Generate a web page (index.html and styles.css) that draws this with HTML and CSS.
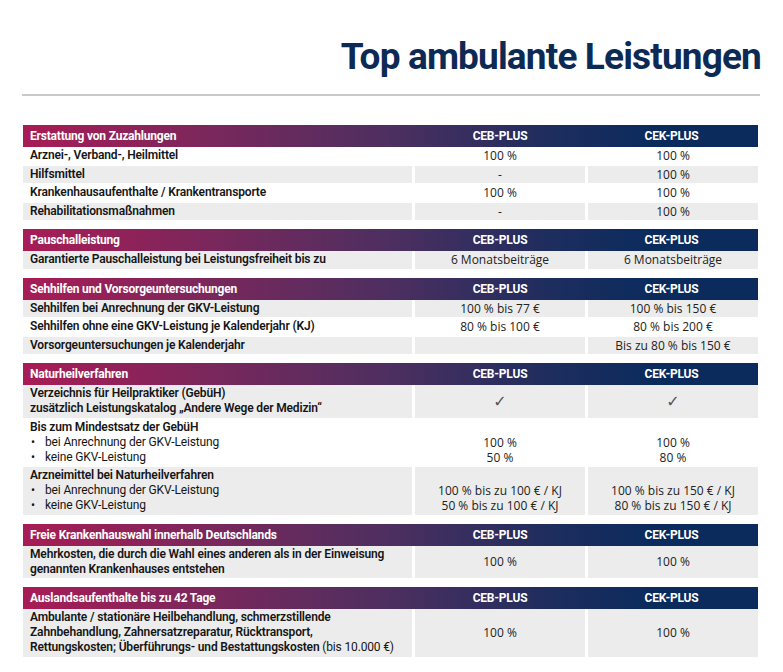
FILE: index.html
```html
<!DOCTYPE html>
<html lang="de">
<head>
    <meta charset="UTF-8">
    <title>Top ambulante Leistungen</title>
    <link rel="stylesheet" href="styles.css">
</head>
<body>
    <div class="page">
        <h1 class="title">Top ambulante Leistungen</h1>
        <hr class="rule">

        <!-- Erstattung von Zuzahlungen -->
        <section class="block">
            <div class="head">
                <span class="head-label">Erstattung von Zuzahlungen</span>
                <span class="head-col">CEB-PLUS</span>
                <span class="head-col">CEK-PLUS</span>
            </div>
            <div class="rows">
                <div class="label">Arznei-, Verband-, Heilmittel</div>
                <div class="val">100 %</div>
                <div class="val">100 %</div>

                <div class="label gray">Hilfsmittel</div>
                <div class="val gray">-</div>
                <div class="val gray">100 %</div>

                <div class="label">Krankenhausaufenthalte / Krankentransporte</div>
                <div class="val">100 %</div>
                <div class="val">100 %</div>

                <div class="label gray">Rehabilitationsmaßnahmen</div>
                <div class="val gray">-</div>
                <div class="val gray">100 %</div>
            </div>
        </section>

        <!-- Pauschalleistung -->
        <section class="block">
            <div class="head">
                <span class="head-label">Pauschalleistung</span>
                <span class="head-col">CEB-PLUS</span>
                <span class="head-col">CEK-PLUS</span>
            </div>
            <div class="rows">
                <div class="label gray">Garantierte Pauschalleistung bei Leistungsfreiheit bis zu</div>
                <div class="val gray">6 Monatsbeiträge</div>
                <div class="val gray">6 Monatsbeiträge</div>
            </div>
        </section>

        <!-- Sehhilfen -->
        <section class="block">
            <div class="head">
                <span class="head-label">Sehhilfen und Vorsorgeuntersuchungen</span>
                <span class="head-col">CEB-PLUS</span>
                <span class="head-col">CEK-PLUS</span>
            </div>
            <div class="rows">
                <div class="label gray">Sehhilfen bei Anrechnung der GKV-Leistung</div>
                <div class="val gray">100 % bis 77 €</div>
                <div class="val gray">100 % bis 150 €</div>

                <div class="label">Sehhilfen ohne eine GKV-Leistung je Kalenderjahr (KJ)</div>
                <div class="val">80 % bis 100 €</div>
                <div class="val">80 % bis 200 €</div>

                <div class="label gray">Vorsorgeuntersuchungen je Kalenderjahr</div>
                <div class="val gray"></div>
                <div class="val gray">Bis zu 80 % bis 150 €</div>
            </div>
        </section>

        <!-- Naturheilverfahren -->
        <section class="block">
            <div class="head">
                <span class="head-label">Naturheilverfahren</span>
                <span class="head-col">CEB-PLUS</span>
                <span class="head-col">CEK-PLUS</span>
            </div>
            <div class="rows">
                <div class="label gray">Verzeichnis für Heilpraktiker (GebüH)<br>zusätzlich Leistungskatalog „Andere Wege der Medizin“</div>
                <div class="val gray check"><span>✓</span></div>
                <div class="val gray check"><span>✓</span></div>

                <div class="label">
                    Bis zum Mindestsatz der GebüH
                    <ul class="bullets">
                        <li>bei Anrechnung der GKV-Leistung</li>
                        <li>keine GKV-Leistung</li>
                    </ul>
                </div>
                <div class="val bottom"><span>100 %<br>50 %</span></div>
                <div class="val bottom"><span>100 %<br>80 %</span></div>

                <div class="label gray">
                    Arzneimittel bei Naturheilverfahren
                    <ul class="bullets">
                        <li>bei Anrechnung der GKV-Leistung</li>
                        <li>keine GKV-Leistung</li>
                    </ul>
                </div>
                <div class="val gray bottom"><span>100 % bis zu 100 € / KJ<br>50 % bis zu 100 € / KJ</span></div>
                <div class="val gray bottom"><span>100 % bis zu 150 € / KJ<br>80 % bis zu 150 € / KJ</span></div>
            </div>
        </section>

        <!-- Krankenhauswahl -->
        <section class="block">
            <div class="head">
                <span class="head-label">Freie Krankenhauswahl innerhalb Deutschlands</span>
                <span class="head-col">CEB-PLUS</span>
                <span class="head-col">CEK-PLUS</span>
            </div>
            <div class="rows">
                <div class="label gray">Mehrkosten, die durch die Wahl eines anderen als in der Einweisung<br>genannten Krankenhauses entstehen</div>
                <div class="val gray">100 %</div>
                <div class="val gray">100 %</div>
            </div>
        </section>

        <!-- Ausland -->
        <section class="block">
            <div class="head">
                <span class="head-label">Auslandsaufenthalte bis zu 42 Tage</span>
                <span class="head-col">CEB-PLUS</span>
                <span class="head-col">CEK-PLUS</span>
            </div>
            <div class="rows">
                <div class="label gray">Ambulante / stationäre Heilbehandlung, schmerzstillende<br>Zahnbehandlung, Zahnersatzreparatur, Rücktransport,<br>Rettungskosten; Überführungs- und Bestattungskosten <span class="thin">(bis 10.000 €)</span></div>
                <div class="val gray">100 %</div>
                <div class="val gray">100 %</div>
            </div>
        </section>
    </div>
</body>
</html>
```

FILE: styles.css
```css
* {
    margin: 0;
    padding: 0;
    box-sizing: border-box;
}

body {
    background: #fff;
    color: #1a1a1a;
    font-family: Roboto, "Liberation Sans", sans-serif;
}

.page {
    width: 783px;
    padding: 0 22px 0 23px;
}

/* Titel */
.title {
    text-align: right;
    color: #0d2a55;
    font-family: Roboto, "Liberation Sans", sans-serif;
    font-weight: bold;
    font-size: 37px;
    letter-spacing: -0.85px;
    line-height: 44px;
    padding-top: 35px;
}

.rule {
    border: 0;
    border-top: 2px solid #c9c9c9;
    margin: 15px 1px 29px -1px;
}

/* Tabellenblöcke */
.block {
    margin-bottom: 9px;
    width: 735px;
}

.head {
    display: grid;
    grid-template-columns: 392px 170px 173px;
    height: 22px;
    align-items: center;
    color: #fff;
    font-weight: bold;
    font-size: 12px;
    letter-spacing: -0.2px;
    background: linear-gradient(90deg, #a81c55 0%, #7b275c 25%, #4c2f60 50%, #1d2d5e 72%, #0c2b5d 85%, #0c2b5d 100%);
}

.head-label {
    padding-left: 7px;
}

.head-col {
    text-align: center;
}

.rows {
    display: grid;
    grid-template-columns: 389px 170px 170px;
    column-gap: 3px;
    row-gap: 1px;
}

.label {
    font-size: 12px;
    font-weight: 600;
    line-height: 15px;
    padding: 1.25px 7px;
    letter-spacing: -0.15px;
    color: #151515;
}

.val {
    font-family: "Open Sans", sans-serif;
    font-size: 12px;
    line-height: 15px;
    padding: 1.25px 4px;
    display: flex;
    align-items: center;
    justify-content: center;
    text-align: center;
    color: #222;
}

.val.bottom {
    align-items: flex-end;
}

.check {
    font-family: "DejaVu Sans", sans-serif;
    font-size: 16px;
    color: #555;
}

.gray {
    background: #ececec;
}

.bullets {
    list-style: none;
    font-weight: normal;
}

.bullets li {
    position: relative;
    padding-left: 15px;
}

.bullets li::before {
    content: "•";
    position: absolute;
    left: 1px;
}

.thin {
    font-weight: normal;
}
```
